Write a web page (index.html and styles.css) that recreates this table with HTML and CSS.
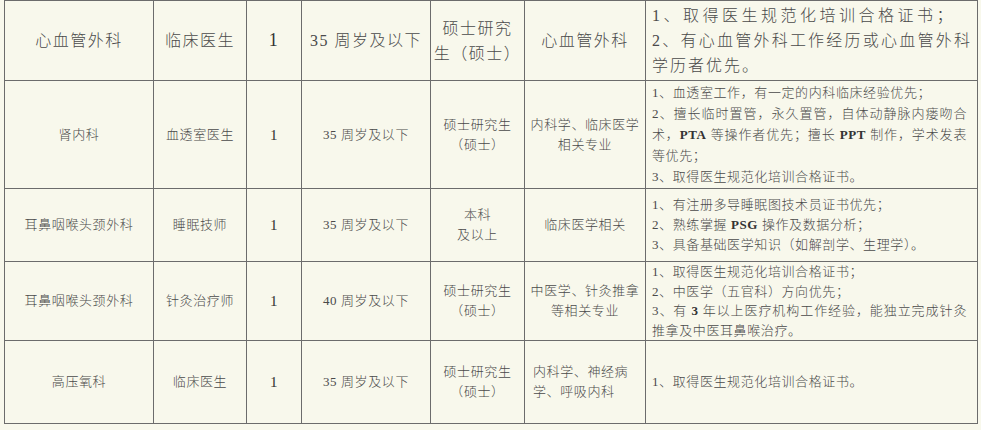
FILE: index.html
```html
<!DOCTYPE html>
<html lang="zh-CN">
<head>
<meta charset="utf-8">
<title>岗位表</title>
<link rel="stylesheet" href="styles.css">
</head>
<body>
<table class="grid">
  <colgroup>
    <col class="c1"><col class="c2"><col class="c3"><col class="c4"><col class="c5"><col class="c6"><col class="c7">
  </colgroup>
  <tbody>
    <tr class="r1 big">
      <td>心血管外科</td>
      <td>临床医生</td>
      <td class="num">1</td>
      <td>35 周岁及以下</td>
      <td><span class="ln">硕士研究</span><span class="ln">生（硕士）</span></td>
      <td>心血管外科</td>
      <td class="req">
        <span class="ln wide">1、取得医生规范化培训合格证书；</span>
        <span class="ln j">2、有心血管外科工作经历或心血管外科</span>
        <span class="ln">学历者优先。</span>
      </td>
    </tr>
    <tr class="r2">
      <td>肾内科</td>
      <td>血透室医生</td>
      <td class="num">1</td>
      <td>35 周岁及以下</td>
      <td><span class="ln">硕士研究生</span><span class="ln">（硕士）</span></td>
      <td><span class="ln">内科学、临床医学</span><span class="ln">相关专业</span></td>
      <td class="req">
        <span class="ln">1、血透室工作，有一定的内科临床经验优先；</span>
        <span class="ln j">2、擅长临时置管，永久置管，自体动静脉内瘘吻合</span>
        <span class="ln j">术，<b>PTA</b> 等操作者优先；擅长 <b>PPT</b> 制作，学术发表</span>
        <span class="ln">等优先；</span>
        <span class="ln">3、取得医生规范化培训合格证书。</span>
      </td>
    </tr>
    <tr class="r3">
      <td>耳鼻咽喉头颈外科</td>
      <td>睡眠技师</td>
      <td class="num">1</td>
      <td>35 周岁及以下</td>
      <td><span class="ln">本科</span><span class="ln">及以上</span></td>
      <td>临床医学相关</td>
      <td class="req">
        <span class="ln">1、有注册多导睡眠图技术员证书优先；</span>
        <span class="ln">2、熟练掌握 <b>PSG</b> 操作及数据分析；</span>
        <span class="ln">3、具备基础医学知识（如解剖学、生理学）。</span>
      </td>
    </tr>
    <tr class="r4">
      <td>耳鼻咽喉头颈外科</td>
      <td>针灸治疗师</td>
      <td class="num">1</td>
      <td>40 周岁及以下</td>
      <td><span class="ln">硕士研究生</span><span class="ln">（硕士）</span></td>
      <td><span class="ln">中医学、针灸推拿</span><span class="ln">等相关专业</span></td>
      <td class="req">
        <span class="ln">1、取得医生规范化培训合格证书；</span>
        <span class="ln">2、中医学（五官科）方向优先；</span>
        <span class="ln j">3、有 <b>3</b> 年以上医疗机构工作经验，能独立完成针灸</span>
        <span class="ln">推拿及中医耳鼻喉治疗。</span>
      </td>
    </tr>
    <tr class="r5">
      <td>高压氧科</td>
      <td>临床医生</td>
      <td class="num">1</td>
      <td>35 周岁及以下</td>
      <td><span class="ln">硕士研究生</span><span class="ln">（硕士）</span></td>
      <td class="left"><span class="ln">内科学、神经病</span><span class="ln">学、呼吸内科</span></td>
      <td class="req">
        <span class="ln">1、取得医生规范化培训合格证书。</span>
      </td>
    </tr>
  </tbody>
</table>
</body>
</html>
```

FILE: styles.css
```css
html, body {
  margin: 0;
  padding: 0;
  background: #f8f8ec;
}

.grid {
  border-collapse: collapse;
  table-layout: fixed;
  width: 973px;
  margin: 0 0 0 4px;
  font-family: "Liberation Serif", "Noto Sans CJK SC", serif;
  font-weight: 300;
  color: #4a4a4a;
  font-size: 13px;
  letter-spacing: 0.6px;
  line-height: 20px;
}

.c1 { width: 149px; }
.c2 { width: 93px; }
.c3 { width: 55px; }
.c4 { width: 129px; }
.c5 { width: 94px; }
.c6 { width: 121px; }
.c7 { width: 332px; }

.grid td {
  border: 1px solid #6c6c6c;
  text-align: center;
  vertical-align: middle;
  padding: 0 2px;
}

.ln {
  display: block;
}

.grid td.req {
  text-align: left;
  padding: 0 10px 0 6px;
}

.grid td.left {
  text-align: left;
  padding-left: 8px;
}

.ln.j {
  text-align: justify;
  text-align-last: justify;
}

.grid b {
  font-weight: bold;
  color: #333333;
}

.num {
  font-size: 15px;
  color: #333333;
}

.r1 { height: 80px; }
.r2 { height: 108px; }
.r3 { height: 73px; }
.r4 { height: 79px; }
.r5 { height: 83px; }

.r2 td.req {
  line-height: 21px;
}

.r4 td.req {
  line-height: 19.5px;
}

.big td {
  font-size: 16px;
  letter-spacing: 1.5px;
  line-height: 25px;
}

.big td.num {
  font-size: 18px;
}

.big td.req {
  letter-spacing: 2px;
  padding: 0 5px 0 6px;
}

.big .ln.wide {
  letter-spacing: 3.5px;
}
```
